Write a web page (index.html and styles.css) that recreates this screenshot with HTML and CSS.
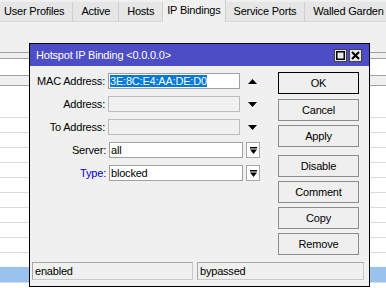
FILE: index.html
```html
<!DOCTYPE html>
<html lang="en">
<head>
    <meta charset="utf-8" />
    <title>Hotspot IP Binding</title>
    <link rel="stylesheet" href="styles.css">
</head>
<body>

  <!-- Tabs -->
  <div class="tabs">
    <div class="tab first">User Profiles</div>
    <div class="tab">Active</div>
    <div class="tab">Hosts</div>
    <div class="tab current">IP Bindings</div>
    <div class="tab">Service Ports</div>
    <div class="tab">Walled Garden</div>
    <div class="tab more"></div>
  </div>

  <!-- List behind the window -->
  <div class="pane">
    <div class="toolbar"></div>
    <div class="strip"></div>
    <div class="filter"></div>
    <div class="head"></div>
    <div class="list">
      <div class="gap"></div>
      <div class="row"></div><div class="row"></div><div class="row"></div><div class="row"></div><div class="row"></div>
      <div class="row"></div><div class="row"></div><div class="row"></div><div class="row"></div><div class="row"></div>
      <div class="row picked"></div>
      <div class="row"></div>
    </div>
  </div>

  <!-- Window -->
  <div class="dialog">
    <div class="titlebar">
      <span class="title">Hotspot IP Binding &lt;0.0.0.0&gt;</span>
      <span class="tbtn"><svg width="9" height="9" viewBox="0 0 9 9"><rect x="0.75" y="0.75" width="7.5" height="7.5" fill="none" stroke="#000" stroke-width="1.5"/></svg></span>
      <span class="tbtn"><svg width="9" height="9" viewBox="0 0 9 9"><path d="M1 1 L8 8 M8 1 L1 8" stroke="#000" stroke-width="2"/></svg></span>
    </div>

    <div class="body">
      <div class="main">
        <div class="form">
          <div class="field">
            <label>MAC Address:</label>
            <div class="input"><span class="sel">3E:8C:E4:AA:DE:D0</span></div>
            <span class="arrow"><svg width="9" height="5" viewBox="0 0 9 5"><path d="M4.5 0 L9 5 H0z"/></svg></span>
          </div>
          <div class="field">
            <label>Address:</label>
            <div class="input off"></div>
            <span class="arrow"><svg width="9" height="5" viewBox="0 0 9 5"><path d="M0 0 H9 L4.5 5z"/></svg></span>
          </div>
          <div class="field">
            <label>To Address:</label>
            <div class="input off"></div>
            <span class="arrow"><svg width="9" height="5" viewBox="0 0 9 5"><path d="M0 0 H9 L4.5 5z"/></svg></span>
          </div>
          <div class="field">
            <label>Server:</label>
            <div class="input">all</div>
            <span class="drop"><svg width="7" height="7" viewBox="0 0 7 7"><rect x="0" y="0" width="7" height="1.5"/><path d="M0 2.5 H7 L3.5 7z"/></svg></span>
          </div>
          <div class="field">
            <label class="blue">Type:</label>
            <div class="input">blocked</div>
            <span class="drop"><svg width="7" height="7" viewBox="0 0 7 7"><rect x="0" y="0" width="7" height="1.5"/><path d="M0 2.5 H7 L3.5 7z"/></svg></span>
          </div>
        </div>

        <div class="buttons">
          <button class="default">OK</button>
          <button>Cancel</button>
          <button class="split">Apply</button>
          <button>Disable</button>
          <button>Comment</button>
          <button>Copy</button>
          <button>Remove</button>
        </div>
      </div>

      <div class="status">
        <div class="cell left">enabled</div>
        <div class="cell right">bypassed</div>
      </div>
    </div>
  </div>

</body>
</html>
```

FILE: styles.css
```css
/* winbox look */
body {
    margin: 0;
    width: 386px;
    height: 288px;
    overflow: hidden;
    background-color: #f0f0f0;
    font-family: "Liberation Sans", Arial, sans-serif;
    font-size: 11px;
    letter-spacing: -0.2px;
    color: #000;
    position: relative;
}

/* tabs */
.tabs { display: flex; height: 22px; white-space: nowrap; }
.tab {
    margin-top: 2px; height: 19px; line-height: 19px;
    padding: 0 8px;
    background-color: #e6e6e6;
    border-right: 1px solid #cfcfcf;
    border-bottom: 1px solid #d9d9d9;
    flex-shrink: 0;
}
.tab.first { padding-left: 4px; }
.tab.current {
    margin-top: 0; height: 22px; line-height: 20px;
    background-color: #f0f0f0; border-bottom: none;
    padding: 0 4px;
}
.tab.more { width: 20px; padding: 0; border-left: 1px solid #cfcfcf; }

/* list behind */
.toolbar { height: 30px; }
.strip { height: 5px; border-top: 1px solid #a0a0a0; border-bottom: 1px solid #a0a0a0; }
.filter { height: 16px; background-color: #fff; border-bottom: 1px solid #a0a0a0; }
.head { height: 9px; border-bottom: 1px solid #a0a0a0; }
.list { background-color: #fff; }
.gap { height: 31px; }
.row { height: 14px; border-top: 1px solid #dcdcdc; }
.row.picked { background-color: #99c2ee; border-top-color: #99c2ee; }

/* window */
.dialog {
    position: absolute; left: 29px; top: 43px;
    width: 341px; height: 244px;
    box-sizing: border-box;
    border: 1px solid #000;
    background-color: #f0f0f0;
    display: flex; flex-direction: column;
}
.titlebar {
    height: 22px; background-color: #4d4dc6;
    display: flex; align-items: center;
    padding: 0 7px 0 6px; gap: 2px;
}
.title { color: #fff; flex: 1; }
.tbtn {
    width: 11px; height: 11px;
    border: 1px solid #404040; background-color: #e8e8e8;
    display: flex; align-items: center; justify-content: center;
}

.body { flex: 1; display: flex; flex-direction: column; padding: 6px 5px 6px 2px; }
.main { display: flex; }
.form { width: 230px; padding-top: 1px; display: flex; flex-direction: column; gap: 7px; }
.field { display: flex; align-items: center; height: 16px; }
.field label { width: 74px; text-align: right; margin-right: 3px; }
.blue { color: #0000d0; }
.input {
    width: 134px; height: 16px; box-sizing: border-box;
    border: 1px solid #a0a0a0; background-color: #fff;
    padding: 0 1px; line-height: 14px; white-space: nowrap;
}
.input.off { background-color: #f0f0f0; border-color: #bcbcbc; }
.sel { background-color: #0078d7; color: #fff; }
.arrow { width: 19px; display: flex; justify-content: center; padding-left: 3px; }
.drop {
    margin-left: 3px; width: 14px; height: 16px; box-sizing: border-box;
    border: 1px solid #a8a8a8; background-color: #fff;
    display: flex; align-items: center; justify-content: center;
}

.buttons { margin-left: 16px; display: flex; flex-direction: column; gap: 4px; }
button {
    width: 81px; height: 22px;
    font-family: inherit; font-size: 11px; letter-spacing: -0.2px;
    background-color: #efefef; color: #000;
    border: 1px solid #8c8c8c; padding: 0;
}
button.default { border-color: #000; margin-bottom: 1px; }
button.split { margin-bottom: 4px; }

.status { margin-top: auto; display: flex; gap: 4px; }
.cell {
    height: 18px; line-height: 17px; box-sizing: border-box;
    border: 1px solid #a8a8a8; border-right-color: #c8c8c8; border-bottom-color: #c8c8c8;
    padding-left: 2px;
}
.left { width: 162px; }
.right { width: 168px; }
```
